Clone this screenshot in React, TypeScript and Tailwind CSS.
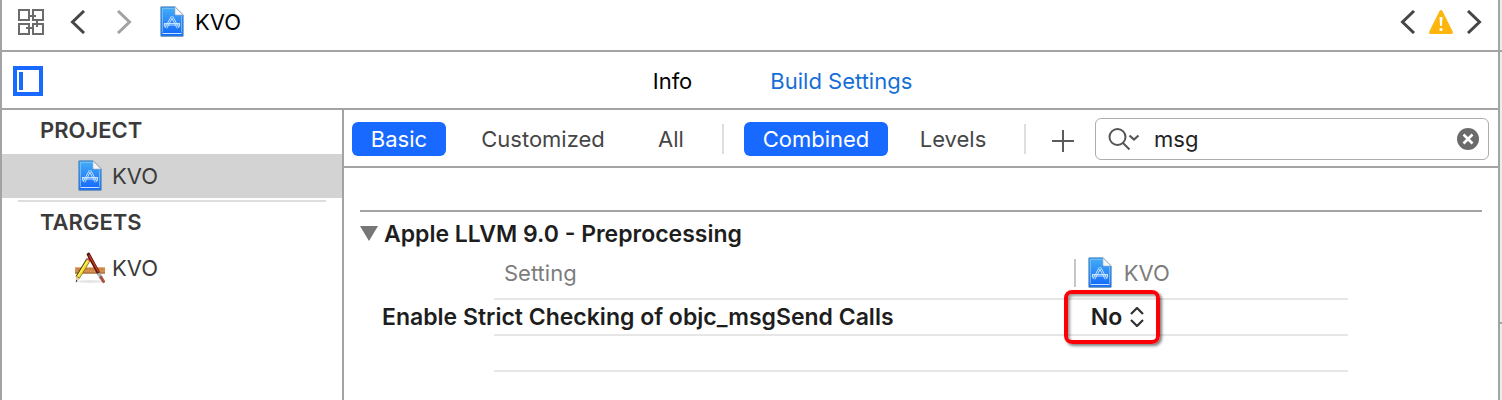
import { useState } from 'react'

const sidebarSections = [
  { title: 'PROJECT', item: 'KVO', icon: 'project', selected: true },
  { title: 'TARGETS', item: 'KVO', icon: 'target', selected: false },
]

function ProjectIcon() {
  return (
    <svg className="h-8 w-6 shrink-0" viewBox="0 0 24 32" fill="none" aria-hidden="true">
      <defs>
        <linearGradient id="sheet" x1="0" y1="0" x2="0" y2="1">
          <stop offset="0" stopColor="#45aef5" />
          <stop offset="1" stopColor="#1266fb" />
        </linearGradient>
      </defs>
      <path d="M.5.5h15l8 8v22.500H.5z" fill="#777" fillOpacity=".5" />
      <path d="M1 1h14l8 8v21H1z" fill="url(#sheet)" stroke="#3c86cf" />
      <path d="M2.500 2.500h11.500M2.500 2.500v24M21.500 10v16.500" stroke="#7cc2f8" strokeWidth=".8" />
      <path d="M2.500 27.500h19" stroke="#c8e2ff" />
      <path d="M15 1l8 8h-7.200q-.8 0-.8-.8z" fill="#f4f6f8" stroke="#a9b3bd" strokeWidth=".6" />
      <path
        d="M11.200 10.500L5.500 21M12.800 10.500L18.500 21M12 12.500l-5 9.500M12 12.500l5 9.500M4.500 17.500h15M4.500 19h15M4.500 17.500q-.8 2.500.8 4M19.500 17.500q.8 2.500-.8 4"
        stroke="#d3eaff"
        strokeWidth=".9"
        strokeLinecap="round"
      />
    </svg>
  )
}

function TargetIcon() {
  return (
    <svg className="h-8 w-8 shrink-0" viewBox="0 0 32 32" fill="none" aria-hidden="true">
      <ellipse cx="16" cy="29.500" rx="13" ry="1.500" fill="#000" fillOpacity=".1" />
      <path d="M1 15h30v6.500H1z" fill="#d58f50" />
      <path d="M1 15.500h30" stroke="#e9b27c" />
      <path d="M1 21h30" stroke="#9d6430" />
      <path d="M4 16v2M7 16v2M10 16v2M13 16v2M16 16v2M19 16v2M22 16v2M25 16v2M28 16v2" stroke="#a86b35" strokeWidth=".8" />
      <path d="M14.500 7.500l-11 18" stroke="#544a18" strokeWidth="4.600" />
      <path d="M14.500 8L4.200 25" stroke="#f4dc20" strokeWidth="3.200" />
      <path d="M13.500 8.500L3.800 24.200" stroke="#fff48a" strokeWidth="1" />
      <path d="M12.500 7.500l4 2.500 1-3-3-2z" fill="#e8506a" />
      <path d="M1.800 24l4 2.500L2 30z" fill="#e6c39a" />
      <path d="M2 28l1.500.8L1.800 30.500z" fill="#222" />
      <path d="M14.500 2.500L25 22" stroke="#571710" strokeWidth="3.600" strokeLinecap="round" />
      <path d="M15 3l9.500 17" stroke="#c23c20" strokeWidth="1.500" />
      <path d="M24.500 21l3 5.500" stroke="#aeb0b3" strokeWidth="3.600" />
      <path d="M27 25.500l2.500 4" stroke="#a65543" strokeWidth="3.200" strokeLinecap="round" />
    </svg>
  )
}

function Chevron({ direction, color }: { direction: 'left' | 'right'; color: string }) {
  return (
    <svg className="h-6 w-4" viewBox="0 0 16 24" fill="none" aria-hidden="true">
      <path
        d={direction === 'left' ? 'M14 1L2.500 12L14 23' : 'M2 1l11.500 11L2 23'}
        stroke={color}
        strokeWidth="3"
      />
    </svg>
  )
}

function NavigatorBar() {
  return (
    <header className="flex h-[52px] items-center border-b-2 border-[#a3a3a3] px-4 pb-1.5">
      <button aria-label="Related items">
        <svg className="h-[26px] w-[26px]" viewBox="0 0 26 26" fill="none" stroke="#6b6b6b" strokeWidth="2" aria-hidden="true">
          <path d="M1 1h10v10H1zM15 1h10v10H15zM1 15h10v10H1zM15 15h10v10H15z" />
          <path d="M11 7h7M19 11v7M8 19h7" />
        </svg>
      </button>
      <button className="ml-[26px]" aria-label="Back">
        <Chevron direction="left" color="#464646" />
      </button>
      <button className="ml-[30px]" aria-label="Forward">
        <Chevron direction="right" color="#a2a2a2" />
      </button>
      <a href="#kvo" className="ml-7 flex items-center gap-[11px] text-black">
        <ProjectIcon />
        KVO
      </a>
      <div className="ml-auto flex items-center gap-3">
        <button aria-label="Previous issue">
          <Chevron direction="left" color="#464646" />
        </button>
        <button aria-label="Show issues">
          <svg className="h-[26px] w-[26px]" viewBox="0 0 26 26" aria-hidden="true">
            <path d="M13 2.500L23.500 23.500H2.500z" fill="#fdb60d" stroke="#fdb60d" strokeWidth="3" strokeLinejoin="round" />
            <path d="M11.500 8h3l-.6 9h-1.800z" fill="#fff" />
            <circle cx="13" cy="20.500" r="1.600" fill="#fff" />
          </svg>
        </button>
        <button aria-label="Next issue">
          <Chevron direction="right" color="#464646" />
        </button>
      </div>
    </header>
  )
}

function EditorTabs() {
  return (
    <div className="flex h-[58px] items-center border-b-2 border-[#a3a3a3] pl-[11px] pt-0.5">
      <button
        className="h-[30px] w-[30px] border-4 border-[#1769ff] p-[2px]"
        aria-label="Toggle project and targets list"
      >
        <span className="block h-full w-1 bg-[#1769ff]" />
      </button>
      <nav className="ml-6 flex flex-1 justify-center gap-[78px]">
        <a href="#info" className="text-black">
          Info
        </a>
        <a href="#build-settings" className="text-[#166fd6]">
          Build Settings
        </a>
      </nav>
    </div>
  )
}

function Sidebar() {
  return (
    <aside className="w-[342px] shrink-0 border-r-2 border-[#a3a3a3] text-[#3b3b3b]">
      {sidebarSections.map(({ title, item, icon, selected }) => (
        <section key={title}>
          <h2 className="flex h-11 items-center pl-[38px] pb-1 font-semibold">{title}</h2>
          <a
            href={`#${icon}`}
            className={
              selected
                ? 'flex h-11 items-center gap-[10px] bg-[#d3d3d3] pl-[76px]'
                : 'flex h-11 items-center gap-1.5 pl-[72px]'
            }
          >
            {icon === 'project' ? <ProjectIcon /> : <TargetIcon />}
            {item}
          </a>
          {selected && <hr className="mx-4 mt-0.5 border-t-2 border-[#dedede]" />}
        </section>
      ))}
    </aside>
  )
}

function FilterBar() {
  const [query, setQuery] = useState('msg')

  return (
    <div className="flex h-[58px] items-center border-b-2 border-[#a3a3a3] pl-2 pr-[9px] pt-px text-[#464646]">
      <button className="h-[34px] w-[94px] rounded-md bg-[#1769ff] text-white">Basic</button>
      <button className="ml-[18px] h-[34px] w-[158px]">Customized</button>
      <button className="ml-[18px] h-[34px] w-[62px]">All</button>
      <span className="mx-5 h-[30px] w-0.5 bg-[#dedede]" />
      <button className="h-[34px] w-36 rounded-md bg-[#1769ff] text-white">Combined</button>
      <button className="ml-4 h-[34px] w-[98px]">Levels</button>
      <span className="ml-[22px] mr-5 h-[30px] w-0.5 bg-[#dedede]" />
      <button className="ml-1.5 mt-1" aria-label="Add build setting">
        <svg className="h-[22px] w-[22px]" viewBox="0 0 22 22" stroke="#5b5b5b" strokeWidth="2" aria-hidden="true">
          <path d="M11 0v22M0 11h22" />
        </svg>
      </button>
      <div className="ml-[21px] flex h-[42px] min-w-0 flex-1 items-center rounded-md border border-[#adadad] pl-3 pr-[9px]">
        <svg className="h-6 w-8 shrink-0" viewBox="0 0 32 24" fill="none" stroke="#555" strokeWidth="2" aria-hidden="true">
          <circle cx="9.500" cy="10" r="8" />
          <path d="M15 16l6.500 6.500" />
          <path d="M21.500 8.500l4.500 4 4.500-4" strokeWidth="2.200" />
        </svg>
        <input
          type="text"
          aria-label="Search settings"
          className="ml-[14px] min-w-0 flex-1 text-[#222] outline-none"
          value={query}
          onChange={(e) => setQuery(e.target.value)}
        />
        <button aria-label="Clear search" onClick={() => setQuery('')}>
          <svg className="h-[22px] w-[22px]" viewBox="0 0 22 22" aria-hidden="true">
            <circle cx="11" cy="11" r="11" fill="#6b6b6b" />
            <path d="M6.500 6.500l9 9M15.500 6.500l-9 9" stroke="#fff" strokeWidth="2.600" />
          </svg>
        </button>
      </div>
    </div>
  )
}

function SettingsTable() {
  return (
    <section className="px-4 pt-[42px]">
      <h3 className="flex h-[46px] items-center border-t-2 border-[#a3a3a3] text-[23px] font-semibold text-[#1e1e1e]">
        <svg className="h-4 w-[18px]" viewBox="0 0 18 16" aria-hidden="true">
          <path d="M0 0h18L9 15z" fill="#777" />
        </svg>
        <span className="ml-1.5">Apple LLVM 9.0 - Preprocessing</span>
      </h3>
      <div className="px-[134px]">
        <table className="w-full table-fixed border-collapse text-left">
          <thead>
            <tr className="h-[43px] border-b-2 border-[#e6e6e6] text-[#7d7d7d]">
              <th className="w-[68%] p-0 pb-2 pl-[10px] font-normal">Setting</th>
              <th className="p-0 pb-2 font-normal">
                <div className="flex items-center">
                  <span className="-ml-px h-7 w-0.5 bg-[#c6c6c6]" />
                  <span className="ml-3">
                    <ProjectIcon />
                  </span>
                  <span className="ml-3">KVO</span>
                </div>
              </th>
            </tr>
          </thead>
          <tbody>
            <tr className="h-9 border-b-2 border-[#e6e6e6] text-[23px] font-semibold text-[#1e1e1e]">
              <td className="p-0">
                <label htmlFor="strict-checking" className="-ml-28 block whitespace-nowrap">
                  Enable Strict Checking of objc_msgSend Calls
                </label>
              </td>
              <td className="relative p-0">
                <div className="relative ml-4 w-[57px]">
                  <select id="strict-checking" className="block w-full appearance-none outline-none">
                    <option>No</option>
                    <option>Yes</option>
                  </select>
                  <svg
                    className="pointer-events-none absolute right-1 top-1/2 h-5 w-[14px] -translate-y-1/2"
                    viewBox="0 0 14 20"
                    fill="none"
                    stroke="#333"
                    strokeWidth="2.200"
                    aria-hidden="true"
                  >
                    <path d="M1 7l6-6 6 6M1 13l6 6 6-6" />
                  </svg>
                </div>
                <span className="pointer-events-none absolute -left-[11px] -top-[10px] h-[54px] w-24 rounded-lg border-4 border-[#fb0006] shadow-[2px_2px_3px_rgba(0,0,0,0.5),inset_2px_2px_3px_rgba(0,0,0,0.4)]" />
              </td>
            </tr>
            <tr className="h-9 border-b-2 border-[#e6e6e6]">
              <td colSpan={2} />
            </tr>
          </tbody>
        </table>
      </div>
    </section>
  )
}

export default function App() {
  return (
    <div className="flex min-h-screen bg-white font-['Inter',sans-serif] text-[22px] leading-7">
      <div className="flex min-w-0 flex-1 flex-col border-x-2 border-[#a3a3a3]">
        <NavigatorBar />
        <EditorTabs />
        <div className="flex flex-1">
          <Sidebar />
          <main className="min-w-0 flex-1">
            <FilterBar />
            <SettingsTable />
          </main>
        </div>
      </div>
      <div className="w-0.5 shrink-0 bg-[#ececec]">
        <div className="h-[52px] border-b-2 border-[#a3a3a3]" />
        <div className="h-[272px] border-b-2 border-[#a3a3a3]" />
      </div>
    </div>
  )
}
